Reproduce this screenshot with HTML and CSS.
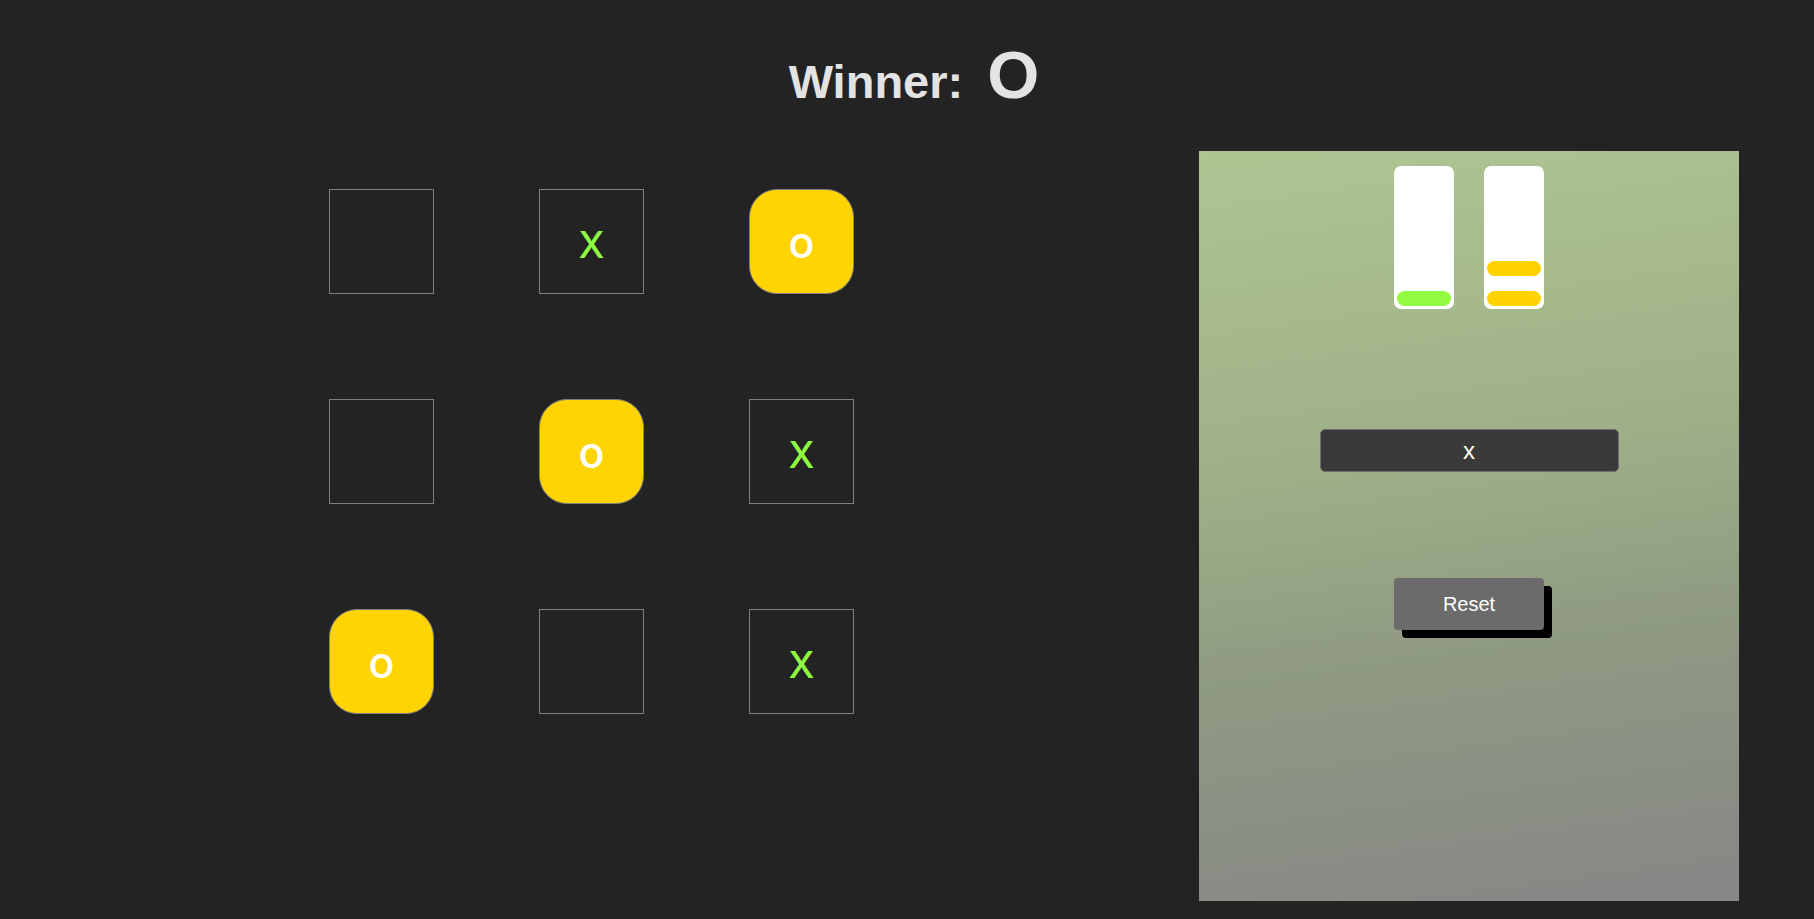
FILE: index.html
```html
<!DOCTYPE html>
<html>
<head>
<meta charset="utf-8">
<link rel="stylesheet" href="styles.css">
</head>
<body>
<header class="title">
  <h1 class="title-label">Winner:</h1>
  <span class="title-winner">O</span>
</header>
<main class="main">
  <section class="board">
    <div class="cell"></div>
    <div class="cell cell-x">X</div>
    <div class="cell cell-o">o</div>
    <div class="cell"></div>
    <div class="cell cell-o">o</div>
    <div class="cell cell-x">X</div>
    <div class="cell cell-o">o</div>
    <div class="cell"></div>
    <div class="cell cell-x">X</div>
  </section>
  <aside class="panel">
    <div class="meters">
      <div class="meter">
        <div class="pill pill-green"></div>
      </div>
      <div class="meter">
        <div class="pill pill-yellow"></div>
        <div class="pill pill-yellow"></div>
      </div>
    </div>
    <input class="turn" type="text" value="x" readonly>
    <button class="reset">Reset</button>
  </aside>
</main>
</body>
</html>
```

FILE: styles.css
```css
* { box-sizing: border-box; }
html, body { margin: 0; padding: 0; }
body {
  background: #232323;
  width: 1814px;
  height: 919px;
  overflow: hidden;
  font-family: "Liberation Sans", Arial, sans-serif;
}
.title {
  height: 151px;
  display: flex;
  justify-content: center;
  align-items: baseline;
  gap: 24px;
  padding-top: 41px;
  padding-left: 14px;
  color: #e3e3e3;
}
.title-label {
  margin: 0;
  font-size: 47px;
  font-weight: bold;
  line-height: 1;
}
.title-winner {
  font-size: 67px;
  font-weight: bold;
  line-height: 1;
}
.main {
  display: flex;
  align-items: flex-start;
  padding-left: 329px;
  padding-right: 75px;
}
.board {
  margin-top: 38px;
  display: grid;
  grid-template-columns: repeat(3, 105px);
  grid-auto-rows: 105px;
  column-gap: 105px;
  row-gap: 105px;
}
.cell {
  border: 1px solid #808080;
  display: flex;
  align-items: center;
  justify-content: center;
  font-family: Inter, "Open Sans", sans-serif;
  font-size: 37px;
  font-weight: 500;
  padding-top: 5px;
}
.cell-x { color: #8ffb40; }
.cell-o {
  background: #ffd400;
  color: #ffffff;
  border-radius: 28px;
  font-size: 43px;
  padding-top: 0;
}
.panel {
  margin-left: auto;
  width: 540px;
  height: 750px;
  background: linear-gradient(172deg, #aec592 0%, #9fb088 40%, #8f9a82 65%, #868686 100%);
  display: flex;
  flex-direction: column;
  align-items: center;
  padding-top: 15px;
}
.meters {
  display: flex;
  gap: 30px;
}
.meter {
  width: 60px;
  height: 143px;
  background: #ffffff;
  border-radius: 7px;
  display: flex;
  flex-direction: column;
  justify-content: flex-end;
  gap: 15px;
  padding: 3px;
}
.pill {
  height: 15px;
  border-radius: 8px;
}
.pill-green { background: #92fc41; }
.pill-yellow { background: #ffd200; }
.turn {
  margin-top: 120px;
  width: 299px;
  height: 43px;
  background: #3a3a3a;
  border: 1px solid #6f6f6f;
  border-radius: 5px;
  color: #ffffff;
  text-align: center;
  font-family: "Liberation Sans", Arial, sans-serif;
  font-size: 24px;
  outline: none;
}
.reset {
  margin-top: 106px;
  width: 150px;
  height: 52px;
  background: #6b6b6b;
  color: #ffffff;
  border: none;
  border-radius: 4px;
  box-shadow: 8px 8px 0 #000000;
  font-family: "Liberation Sans", Arial, sans-serif;
  font-size: 20px;
}
```
